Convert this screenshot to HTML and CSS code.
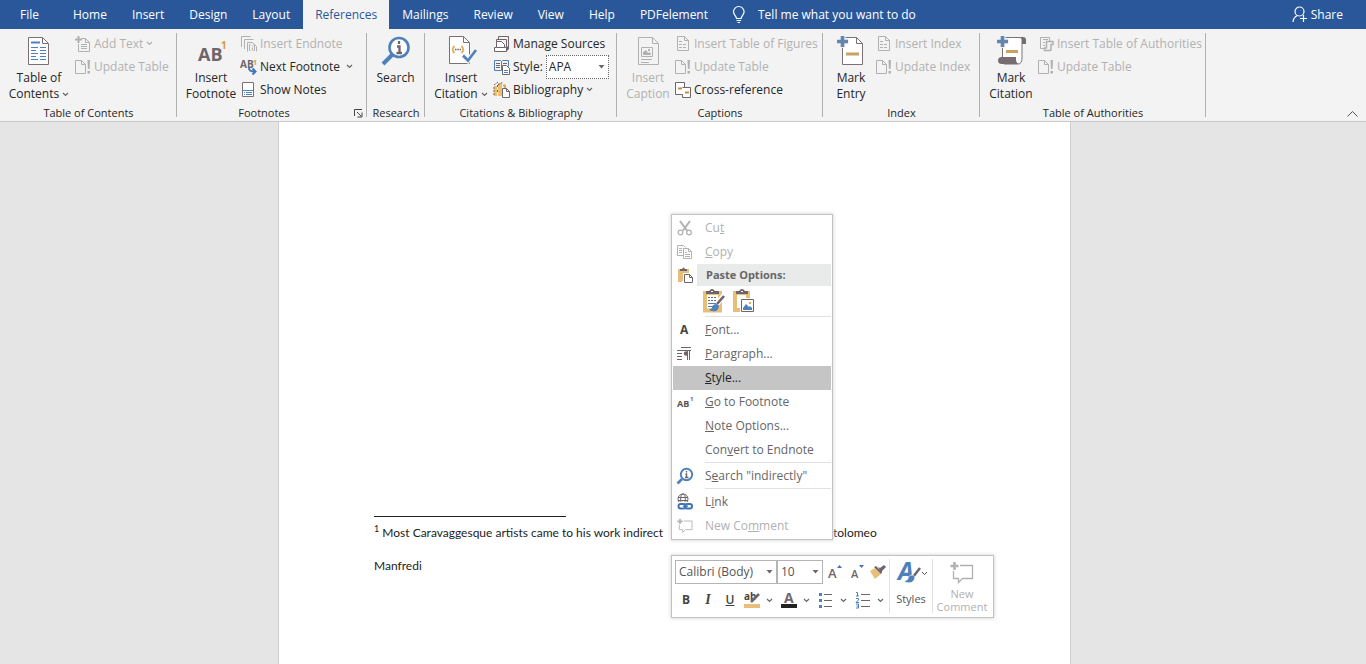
FILE: index.html
```html
<!DOCTYPE html>
<html lang="en">
<head>
<meta charset="utf-8">
<title>Document - Word</title>
<link rel="stylesheet" href="styles.css">
</head>
<body>
<svg class="defs" aria-hidden="true">
  <symbol id="chev" viewBox="0 0 7 5"><path d="M1 1l2.500 2.500L6 1" fill="none" stroke="currentColor" stroke-width="1.200"/></symbol>
  <symbol id="arrow" viewBox="0 0 7 4"><path d="M0.500 0h6L3.500 3.500z" fill="currentColor"/></symbol>
  <symbol id="update" viewBox="0 0 16 16"><path d="M.5 1.500h6l4 4v9H.5zM6.500 1.500v4h4" fill="none" stroke="currentColor"/><path d="M12.500 1h2.500l-.4 9h-1.700zM12.500 12H15v2.500h-2.500z" fill="currentColor"/></symbol>
  <symbol id="list" viewBox="0 0 16 16"><path d="M2.500.5h7l4 4v10h-11zM9.500.5v4h4" fill="none" stroke="currentColor"/><path d="M4 5.500h3M4 8.500h8M4 11.500h8" stroke="currentColor" stroke-dasharray="3 1"/></symbol>
  <symbol id="bubble" viewBox="0 0 24 24"><path d="M10 4.500h12.500v13h-10l-4 4v-4h-5V10" fill="none" stroke="currentColor" stroke-width="1.300"/><path d="M4.500 1v8M.5 5h8" stroke="currentColor" stroke-width="2.500"/></symbol>
  <symbol id="search" viewBox="0 0 30 30"><path d="M2 28l9-9" stroke="#5080bb" stroke-width="4"/><circle cx="18" cy="11.500" r="9.500" fill="#fff" stroke="#5080bb" stroke-width="2.600"/><path d="M18 5v3M16 10.500h2.500V17M15.500 17h5.500" fill="none" stroke="#6f6469" stroke-width="2.300"/></symbol>
</svg>

<header>
  <nav class="tabs" aria-label="Ribbon tabs">
    <a class="tab file" href="#">File</a>
    <a class="tab" href="#">Home</a>
    <a class="tab" href="#">Insert</a>
    <a class="tab" href="#">Design</a>
    <a class="tab" href="#">Layout</a>
    <a class="tab active" href="#" aria-current="page">References</a>
    <a class="tab" href="#">Mailings</a>
    <a class="tab" href="#">Review</a>
    <a class="tab" href="#">View</a>
    <a class="tab" href="#">Help</a>
    <a class="tab" href="#">PDFelement</a>
    <label class="tell">
      <svg width="14" height="18" viewBox="0 0 14 18"><path d="M4.500 12.500C4.500 10 1.500 9 1.500 5.800a5.300 5.300 0 0 1 10.600 0C12.100 9 9.100 10 9.100 12.500zM4.500 14.500h4.600M5.500 16.500h2.600" fill="none" stroke="#fff" stroke-width="1.200"/></svg>
      <input type="text" aria-label="Tell me what you want to do" placeholder="Tell me what you want to do">
    </label>
    <button class="share">
      <svg width="16" height="17" viewBox="0 0 16 17"><circle cx="7.500" cy="5.500" r="4.500" fill="none" stroke="#fff" stroke-width="1.200"/><path d="M1 16c.3-3.500 2-5.500 4.500-6.500M8 12.500h7M11.500 9v7" fill="none" stroke="#fff" stroke-width="1.200"/></svg>
      Share
    </button>
  </nav>

  <div class="ribbon">
    <section class="group g-toc" aria-label="Table of Contents">
      <div class="body">
        <button class="large">
          <svg width="30" height="32" viewBox="0 0 30 32"><path d="M4.500 2.500h14l6 6v21h-20z" fill="#fff" stroke="#7b7074"/><path d="M18.500 2.500v6h6" fill="none" stroke="#7b7074"/><path d="M7 7.500h9" stroke="#5080bb" stroke-width="2"/><path d="M7 12.500h7M16 12.500h6M7 15.500h5M16 15.500h6M7 18.500h7M16 18.500h6M7 21.500h5M16 21.500h6M7 24.500h7M16 24.500h6" stroke="#5080bb"/></svg>
          <span>Table of<br>Contents <svg class="chev"><use href="#chev"/></svg></span>
        </button>
        <div class="stack">
          <button class="small" disabled><svg class="ic" viewBox="0 0 16 16"><path d="M6.500 2.500h4l4 4v9h-11V8M10.500 2.500v4h4M6 8.500h6M6 10.500h6M6 12.500h6" fill="none" stroke="currentColor"/><path d="M3.500 0v7M0 3.500h7" stroke="currentColor" stroke-width="2"/></svg>Add Text <svg class="chev"><use href="#chev"/></svg></button>
          <button class="small" disabled><svg class="ic"><use href="#update"/></svg>Update Table</button>
        </div>
      </div>
      <h2>Table of Contents</h2>
    </section>

    <section class="group g-foot" aria-label="Footnotes">
      <div class="body">
        <button class="large">
          <svg width="30" height="32" viewBox="0 0 30 32"><text class="t-ab" x="2" y="26">AB</text><text class="t-one" x="25" y="14">1</text></svg>
          <span>Insert<br>Footnote</span>
        </button>
        <div class="stack">
          <button class="small" disabled><svg class="ic" viewBox="0 0 16 16"><path d="M.5 11V.5h9M3.500 13V3.500h9M6.500 15.500v-9h5l4 4v5M9.500 8.500h-1v6h1M12.500 8.500h1v6h-1M11.500 9.500v1M11.500 11.500v3" fill="none" stroke="currentColor"/></svg>Insert Endnote</button>
          <button class="small"><svg class="ic" viewBox="0 0 16 16"><text class="t-ab-s" x="-1" y="9">AB</text><text class="t-one-s" x="12" y="6">1</text><path d="M8 9c0 3 2 3.500 6 3.500M11.500 9.500l3 3-3 3" fill="none" stroke="#3f75b5" stroke-width="2"/></svg>Next Footnote <svg class="chev far"><use href="#chev"/></svg></button>
          <button class="small"><svg class="ic" viewBox="0 0 16 16"><path d="M1.500.5h11v14h-11z" fill="#fff" stroke="#7b7074"/><path d="M1 8.500h12M3 10.500h1M5 10.500h6M3 12.500h1M5 12.500h6" stroke="#5080bb"/></svg>Show Notes</button>
        </div>
      </div>
      <h2>Footnotes</h2>
      <button class="launcher" aria-label="Footnote and endnote settings"><svg width="9" height="9" viewBox="0 0 9 9"><path d="M.5 7V.5H8M3 3l4 4M8 3.500V8H3.500" fill="none" stroke="#444"/></svg></button>
    </section>

    <section class="group g-research" aria-label="Research">
      <div class="body">
        <button class="large"><svg width="30" height="32" viewBox="0 0 30 32"><use href="#search" y="1" width="30" height="30"/></svg><span>Search</span></button>
      </div>
      <h2>Research</h2>
    </section>

    <section class="group g-cite" aria-label="Citations &amp; Bibliography">
      <div class="body">
        <button class="large">
          <svg width="30" height="32" viewBox="0 0 30 32"><path d="M3.500 1.500h14l6 6v21h-20z" fill="#fff" stroke="#7b7074"/><path d="M17.500 1.500v6h6" fill="none" stroke="#7b7074"/><path d="M8.500 11Q5 14.500 8.500 18M15.500 11q3.500 3.500 0 7" fill="none" stroke="#e3b264" stroke-width="2"/><path d="M9 14.500h6" stroke="#6f6469" stroke-width="1.500" stroke-dasharray="1.500 .8"/><path d="M17 20.500l5 5L30 15" fill="none" stroke="#f3f3f3" stroke-width="5"/><path d="M17 20.500l5 5L30 15" fill="none" stroke="#5080bb" stroke-width="2.600"/></svg>
          <span>Insert<br>Citation <svg class="chev"><use href="#chev"/></svg></span>
        </button>
        <div class="stack">
          <button class="small"><svg class="ic" viewBox="0 0 16 16"><path d="M4.500 3V.5h10V11M2.500 6V3.500h10V13" fill="none" stroke="#6f6469"/><path d="M.5 15.500v-4h2v-6h5l3 3v3h2v4zM2.500 11.500h8" fill="#fff" stroke="#6f6469"/><path d="M13 11l2-2v4l-2 2z" fill="#6f6469"/></svg>Manage Sources</button>
          <div class="small style-row"><svg class="ic" viewBox="0 0 16 16"><path d="M.5 1.500h6l1 1 1-1h6v6M7.500 2.500v9M.5 1.500v10h7" fill="none" stroke="#5080bb"/><path d="M2 4.500h4M2 6.500h4M2 8.500h4M9 4.500h4" stroke="#6f6469"/><path d="M8.500 6.500h4l3 3v6h-7z" fill="#fff" stroke="#6f6469"/><path d="M10 11.500h4M10 13.500h4" stroke="#5080bb"/></svg><label for="style">Style:</label>
            <span class="select"><select id="style"><option>APA</option></select><svg class="arrow"><use href="#arrow"/></svg></span></div>
          <button class="small"><svg class="ic" viewBox="0 0 16 16"><path d="M0 4h3v10H0zM4 1h4v13H4z" fill="#e8bf78"/><path d="M0 3l4-3M4 3l5-3M0 5v9M3.500 3v3M3.500 8v2" stroke="#6f6469" stroke-dasharray="2 1"/><path d="M9 3.500h2V6" fill="none" stroke="#e3a94f" stroke-width="2"/><path d="M8.500 6.500h4l3 3v6h-7z" fill="#fff" stroke="#6f6469"/><path d="M12.500 6.500v3h3" fill="none" stroke="#6f6469"/></svg>Bibliography <svg class="chev"><use href="#chev"/></svg></button>
        </div>
      </div>
      <h2>Citations &amp; Bibliography</h2>
    </section>

    <section class="group g-cap" aria-label="Captions">
      <div class="body">
        <button class="large" disabled>
          <svg width="30" height="32" viewBox="0 0 30 32"><path d="M5.500 2.500h14l6 6v21h-20zM19.500 2.500v6h6" fill="none" stroke="currentColor"/><path d="M8.500 12.500h11v9h-11zM8 24.500h11M8 27.500h8" fill="none" stroke="currentColor"/><path d="M10 20v-3l3-2 2 3 2-1 1 3zM15 14h2v2h-2z" fill="currentColor"/></svg>
          <span>Insert<br>Caption</span>
        </button>
        <div class="stack">
          <button class="small" disabled><svg class="ic"><use href="#list"/></svg>Insert Table of Figures</button>
          <button class="small" disabled><svg class="ic"><use href="#update"/></svg>Update Table</button>
          <button class="small"><svg class="ic" viewBox="0 0 16 16"><path d="M.5.5h9v12h-9z" fill="#fff" stroke="#6f6469"/><path d="M7.500 5.500h8v10h-8v-3" fill="#fff" stroke="#6f6469"/><path d="M3 6.500h4M10 10.500h4" stroke="#c98b3c" stroke-width="2"/></svg>Cross-reference</button>
        </div>
      </div>
      <h2>Captions</h2>
    </section>

    <section class="group g-index" aria-label="Index">
      <div class="body">
        <button class="large">
          <svg width="30" height="32" viewBox="0 0 30 32"><path d="M6.500 2.500h14l6 6v21h-20z" fill="#fff" stroke="#7b7074"/><path d="M20.500 2.500v6h6" fill="none" stroke="#7b7074"/><path d="M6.500 0v13M0 6.500h13" stroke="#f3f3f3" stroke-width="6"/><path d="M6.500 1v11M1 6.500h11" stroke="#6286af" stroke-width="3.600"/><path d="M10 19h13" stroke="#c9a262" stroke-width="3"/></svg>
          <span>Mark<br>Entry</span>
        </button>
        <div class="stack">
          <button class="small" disabled><svg class="ic"><use href="#list"/></svg>Insert Index</button>
          <button class="small" disabled><svg class="ic"><use href="#update"/></svg>Update Index</button>
        </div>
      </div>
      <h2>Index</h2>
    </section>

    <section class="group g-auth" aria-label="Table of Authorities">
      <div class="body">
        <button class="large">
          <svg width="30" height="32" viewBox="0 0 30 32"><path d="M6.500 23V2.500H26V23q0 6-4 6H8z" fill="#fff" stroke="#7b7074"/><path d="M24 2h3q3 0 3 3v4h-4V5q0-2-2-2zM5 22h15v3q0 2 2 4H5q-3-.5-3-3.500T5 22z" fill="#766c72"/><path d="M6.500 0v13M0 6.500h13" stroke="#f3f3f3" stroke-width="6"/><path d="M6.500 1v11M1 6.500h11" stroke="#6286af" stroke-width="3.600"/><path d="M10 16.500h12" stroke="#c9a262" stroke-width="3"/></svg>
          <span>Mark<br>Citation</span>
        </button>
        <div class="stack">
          <button class="small" disabled><svg class="ic" viewBox="0 0 16 16"><path d="M7 12.500H2.500V1.500h9V5M5 3.500h5M5 6.500h2M5 9.500h2" fill="none" stroke="currentColor"/><path d="M8.500 12V5.500H15v3h-2V14q-1 .5-1 .5H6.500V12z" fill="none" stroke="currentColor" stroke-width="1.500"/></svg>Insert Table of Authorities</button>
          <button class="small" disabled><svg class="ic"><use href="#update"/></svg>Update Table</button>
        </div>
      </div>
      <h2>Table of Authorities</h2>
    </section>
    <button class="collapse" aria-label="Collapse the ribbon"><svg width="11" height="6" viewBox="0 0 11 6"><path d="M.5 5.500l5-5 5 5" fill="none" stroke="#555"/></svg></button>
  </div>
</header>

<main class="workspace">
  <article class="page">
    <hr class="note-rule">
    <p class="note"><span class="lead"><sup>1</sup> Most Caravaggesque artists came to his work indirect</span><span>tolomeo</span></p>
    <p>Manfredi</p>

    <div class="menu" role="menu">
      <button role="menuitem" disabled><svg class="mi" viewBox="0 0 16 16"><path d="M3 1l7 9.500M13 1L6 10.500" stroke="currentColor" stroke-width="2"/><circle cx="3.500" cy="12.500" r="2.300" fill="none" stroke="currentColor" stroke-width="1.300"/><circle cx="12" cy="12.500" r="2.300" fill="none" stroke="currentColor" stroke-width="1.300"/></svg><span>Cu<u>t</u></span></button>
      <button role="menuitem" disabled><svg class="mi" viewBox="0 0 16 16"><path d="M6 11.500H.5V1.500h6l2 2M2 4.500h3M2 6.500h3M2 8.500h3M6.500 4.500h5l3 3v7h-8zM11.500 4.500v3h3M8 8.500h2M8 10.500h5M8 12.500h5" fill="none" stroke="currentColor"/></svg><span><u>C</u>opy</span></button>
      <div class="heading"><svg class="mi" viewBox="0 0 16 16"><path d="M1 2h11v4H9V4H5v11H1z" fill="#e8bf78"/><path d="M5 4h4v3H6v7H5z" fill="#e8bf78"/><path d="M3 4V2h2q1.500-3 3 0h2v2z" fill="#6f6469"/><path d="M7.500 7.500h5l3 3v5h-8z" fill="#fff" stroke="#fff" stroke-width="3"/><path d="M7.500 7.500h5l3 3v5h-8zM12.500 7.500v3h3" fill="#fff" stroke="#6f6469"/></svg><strong>Paste Options:</strong></div>
      <div class="paste">
        <button aria-label="Merge formatting"><svg width="22" height="24" viewBox="0 0 22 24"><path d="M2 4h15v17.500H2z" fill="#fff" stroke="#e8bf78" stroke-width="4"/><path d="M3 5V2h3q3-4 6 0h4v3z" fill="#6f6469"/><path d="M8 2h2v1H8z" fill="#fff"/><path d="M5 8.500h9M5 11.500h9" stroke="#6f6469" stroke-dasharray="2 1"/><path d="M5 14.500h8M5 17.500h5" stroke="#5080bb"/><path d="M21 6l-7 9" stroke="#fff" stroke-width="5"/><path d="M21 7l-7 8" stroke="#6f6469" stroke-width="2.500"/><path d="M14 15q-5 0-5 4l-3 2q9 4 10-4z" fill="#5080bb"/></svg></button>
        <button aria-label="Picture"><svg width="22" height="24" viewBox="0 0 22 24"><path d="M8 21H2V4h13v5" fill="none" stroke="#e8bf78" stroke-width="4"/><path d="M3 5V2h3q3-4 6 0h3v3z" fill="#6f6469"/><path d="M8 2h2v1H8z" fill="#fff"/><path d="M8.500 10.500h12v12h-12z" fill="#fff" stroke="#fff" stroke-width="3"/><path d="M8.500 10.500h12v12h-12z" fill="#fff" stroke="#6f6469"/><path d="M10 21v-2l3-4 3 3 1-1 2 2v2z" fill="#5080bb"/><path d="M16 13h2v2h-2z" fill="#e3a94f"/></svg></button>
      </div>
      <div class="sep" role="separator"></div>
      <button role="menuitem"><svg class="mi" viewBox="0 0 16 16"><text class="t-menu" x="3" y="12">A</text></svg><span><u>F</u>ont...</span></button>
      <button role="menuitem"><svg class="mi" viewBox="0 0 16 16"><path d="M4 1.500h10M0 4.500h14M0 7.500h5M0 10.500h5M0 13.500h5M10.500 5v9M12.500 5v9" stroke="#6f6469"/><circle cx="9" cy="7.500" r="2.200" fill="#6f6469"/></svg><span><u>P</u>aragraph...</span></button>
      <button role="menuitem" class="hover"><span class="mi"></span><span><u>S</u>tyle...</span></button>
      <button role="menuitem"><svg class="mi" viewBox="0 0 16 16"><text class="t-ab-m" x="0" y="13">AB</text><text class="t-one-m" x="13" y="7">1</text></svg><span><u>G</u>o to Footnote</span></button>
      <button role="menuitem"><span class="mi"></span><span><u>N</u>ote Options...</span></button>
      <button role="menuitem"><span class="mi"></span><span>Con<u>v</u>ert to Endnote</span></button>
      <div class="sep" role="separator"></div>
      <button role="menuitem"><svg class="mi" viewBox="0 0 16 16"><path d="M.5 15.500L5 11" stroke="#5080bb" stroke-width="2.600"/><circle cx="9.500" cy="6.500" r="5.700" fill="#fff" stroke="#5080bb" stroke-width="1.900"/><path d="M9.500 3v1.500M8.500 6h1v3.500M8 9.500h3.500" fill="none" stroke="#6f6469" stroke-width="1.500"/></svg><span>S<u>e</u>arch "indirectly"</span></button>
      <div class="sep" role="separator"></div>
      <button role="menuitem"><svg class="mi" viewBox="0 0 16 16"><circle cx="6" cy="5" r="5" fill="none" stroke="#6f6469"/><ellipse cx="6" cy="5" rx="2.300" ry="5" fill="none" stroke="#6f6469"/><path d="M1 3.500h10M1 6.500h10" stroke="#6f6469"/><path d="M0 8h16v8H0z" fill="#fff"/><rect x="1.500" y="10" width="7" height="4.500" rx="2.200" fill="none" stroke="#3f75b5" stroke-width="2"/><rect x="8" y="10" width="7" height="4.500" rx="2.200" fill="none" stroke="#3f75b5" stroke-width="2"/><path d="M6 12.200h5" stroke="#3f75b5" stroke-width="1.300"/></svg><span>L<u>i</u>nk</span></button>
      <button role="menuitem" disabled><svg class="mi"><use href="#bubble"/></svg><span>New Co<u>m</u>ment</span></button>
    </div>

    <div class="mini" role="toolbar" aria-label="Mini toolbar">
      <div class="mini-main">
        <div class="mini-row">
          <span class="select font"><select aria-label="Font"><option>Calibri (Body)</option></select><svg class="arrow"><use href="#arrow"/></svg></span>
          <span class="select size"><select aria-label="Font size"><option>10</option></select><svg class="arrow"><use href="#arrow"/></svg></span>
          <button aria-label="Grow font"><svg width="16" height="18" viewBox="0 0 16 18"><text class="t-grow" x="2" y="15">A</text><path d="M11 5l2.500-3L16 5z" fill="#3f75b5"/></svg></button>
          <button aria-label="Shrink font"><svg width="16" height="18" viewBox="0 0 16 18"><text class="t-shrink" x="3" y="15">A</text><path d="M11 2h5l-2.500 3z" fill="#3f75b5"/></svg></button>
          <button aria-label="Format painter"><svg width="16" height="16" viewBox="0 0 16 16"><path d="M5 4l6 6-6 5-5-8z" fill="#e8bf78"/><path d="M4 3l2-1 6 6-1 2zM8 3l2 1 4-3 2 2-4 4 0 2z" fill="#6f6469"/></svg></button>
        </div>
        <div class="mini-row">
          <button class="b">B</button><button class="i">I</button><button class="u">U</button>
          <button class="split" aria-label="Text highlight color"><svg width="16" height="18" viewBox="0 0 16 18"><text class="t-hl" x="0" y="9">ab</text><path d="M15 3L7 11" stroke="#6f6469" stroke-width="2.500"/><path d="M0 13h16v4H0z" fill="#e8bf78"/></svg><svg class="chev"><use href="#chev"/></svg></button>
          <button class="split" aria-label="Font color"><svg width="16" height="18" viewBox="0 0 16 18"><text class="t-color" x="3" y="12">A</text><path d="M0 13h16v4H0z" fill="#222"/></svg><svg class="chev"><use href="#chev"/></svg></button>
          <button class="split" aria-label="Bullets"><svg width="16" height="18" viewBox="0 0 16 18"><path d="M1 2h3v3H1zM1 8h3v3H1zM1 14h3v3H1z" fill="#5080bb"/><path d="M6 3.500h8M6 9.500h8M6 15.500h8" stroke="#6f6469"/></svg><svg class="chev"><use href="#chev"/></svg></button>
          <button class="split" aria-label="Numbering"><svg width="16" height="18" viewBox="0 0 16 18"><path d="M1 1.500h1.500V5M1 5h3M1 7.500h2.500V9L1 11.500h3M1 13h2.500v4H1M1.500 15h2" fill="none" stroke="#5080bb"/><path d="M6 3.500h9M6 9.500h9M6 15.500h9" stroke="#6f6469"/></svg><svg class="chev"><use href="#chev"/></svg></button>
        </div>
      </div>
      <button class="tall styles"><svg width="32" height="24" viewBox="0 0 32 24"><text class="t-styles" x="3" y="19">A</text><path d="M25 7l-7 8" stroke="#fff" stroke-width="4"/><path d="M25 7l-7 9" stroke="#6f6469" stroke-width="2.500"/><path d="M18 14q-5 0-5 4l-4 3q10 3 11-5z" fill="#5080bb" stroke="#fff" stroke-width=".6"/><path d="M27 11l2.500 2.500L32 11" fill="none" stroke="#555"/></svg>Styles</button>
      <button class="tall comment" disabled><svg width="24" height="24"><use href="#bubble"/></svg>New<br>Comment</button>
    </div>
  </article>
</main>
</body>
</html>
```
FILE: styles.css
```css
* { box-sizing: border-box; }
body {
  margin: 0;
  min-height: 100vh;
  display: flex;
  flex-direction: column;
  background: #e5e5e5;
  color: #262626;
  font: 12px/16px "Open Sans", "Noto Sans", sans-serif;
}
button, input, select { font: inherit; color: inherit; }
button { border: 0; padding: 0; background: none; white-space: nowrap; }
button:disabled { color: #b1b1b1; }
svg { display: block; flex: none; overflow: visible; }
.defs { position: absolute; width: 0; height: 0; }

/* Tab strip */
.tabs { display: flex; gap: 1px; height: 29px; background: #2a579a; color: #fff; }
.tab { padding: 0 12px; line-height: 29px; color: inherit; text-decoration: none; }
.tab.file { padding: 0 21px 0 20px; }
.tab.active { background: #f3f3f3; color: #2a579a; }
.tell { display: flex; align-items: center; gap: 12px; margin-left: 11px; flex: 1; }
.tell input { width: 200px; border: 0; padding: 0; background: none; outline: 0; }
.tell input::placeholder { color: #fff; opacity: 1; }
.share { display: flex; align-items: center; gap: 3px; padding-right: 23px; }

/* Ribbon */
.ribbon { display: flex; height: 93px; background: #f3f3f3; border-bottom: 1px solid #c8c8c8; }
.group { position: relative; display: flex; flex-direction: column; flex: none; }
.group::after { content: ""; position: absolute; right: 0; top: 4px; bottom: 4px; width: 1px; background: #b1b1b1; }
.body { display: flex; height: 75px; padding-top: 3px; padding-left: 4px; }
.group h2 { margin: 0; font-size: 11px; font-weight: 400; line-height: 17px; text-align: center; }
.large { display: flex; flex-direction: column; align-items: center; padding-top: 3px; gap: 3px; }
.large span { line-height: 16px; }
.stack { display: flex; flex-direction: column; }
.small { display: flex; align-items: center; gap: 3px; height: 23px; white-space: nowrap; }
.ic { width: 16px; height: 16px; }
.chev { display: inline-block; width: 7px; height: 5px; color: #666; vertical-align: middle; }
:disabled .chev { color: #b1b1b1; }
.chev.far { margin-left: 3px; }
.g-toc { width: 177px; } .g-toc .large { width: 70px; margin-right: 1px; }
.g-foot { width: 190px; } .g-foot .body { padding-left: 6px; } .g-foot .large { width: 56px; margin-right: 2px; }
.g-foot h2 { padding-right: 16px; }
.g-research { width: 58px; } .g-research .large { width: 49px; }
.g-cite { width: 192px; } .g-cite .body { padding-left: 6px; } .g-cite .large { width: 60px; margin-right: 3px; }
.g-cap { width: 206px; } .g-cap .large { width: 54px; }
.g-index { width: 157px; } .g-index .large { width: 48px; margin-right: 1px; }
.g-auth { width: 226px; } .g-auth .large { width: 54px; }
.launcher { position: absolute; right: 4px; bottom: 3px; }
.collapse { margin-left: auto; align-self: flex-end; padding: 0 8px 4px 0; }

.select { position: relative; display: block; }
.select select { display: block; width: 100%; height: 24px; appearance: none; margin: 0; padding: 0 0 0 3px; background: #fff; border: 1px solid #b4b4b4; border-radius: 0; outline: 0; }
.select .arrow { position: absolute; right: 4px; top: 10px; width: 7px; height: 4px; color: #6f6469; pointer-events: none; }
.style-row .select { width: 63px; }
.style-row select { border: 1px dotted #666; padding-left: 2px; }

/* Document area */
.workspace { flex: 1; display: flex; justify-content: center; padding-right: 17px; }
.page { position: relative; width: 793px; padding: 394px 95px 0; background: #fff; border: solid #cfcfcf; border-width: 0 1px; }
.note-rule { width: 192px; height: 1px; margin: 0; border: 0; background: #222; }
.page p { margin: 0; font: 12px/33px Lato, "Open Sans", sans-serif; color: #222; white-space: nowrap; }
.page .note { display: flex; line-height: 32px; }
.note .lead { width: 459px; }
.page sup { font-size: 9px; line-height: 0; }

/* Context menu */
.menu { position: absolute; left: 392px; top: 92px; width: 162px; padding: 1px; display: flex; flex-direction: column; background: #fff; border: 1px solid #c1c1c1; box-shadow: 0 0 3px 1px #e2e2e2; color: #666; }
.menu > button, .heading { display: flex; align-items: center; gap: 12px; height: 24px; padding-left: 4px; }
.menu > .hover { background: #c5c5c5; color: #222; }
.mi { width: 16px; height: 16px; flex: none; }
.menu .heading { height: 22px; gap: 4px; }
.heading strong { flex: 1; padding-left: 9px; line-height: 22px; background: #e9ebeb; font-size: 11px; font-weight: 700; }
.paste { display: flex; align-items: center; gap: 8px; height: 30px; padding-left: 30px; }
.sep { height: 1px; margin: 0 0 1px 32px; background: #e1e1e1; }

/* Mini toolbar */
.mini { position: absolute; left: 392px; top: 433px; display: flex; padding: 3px 2px 4px 3px; background: #fff; border: 1px solid #c1c1c1; box-shadow: 0 0 3px 1px #e2e2e2; color: #555; }
.mini-main { padding-top: 1px; }
.mini-row { display: flex; align-items: center; height: 24px; }
.mini-row + .mini-row { margin-top: 4px; }
.mini-row > button { width: 22px; height: 24px; display: flex; align-items: center; justify-content: center; color: #444; }
.font { width: 102px; }
.size { width: 46px; }
.mini-row .split { width: 37px; justify-content: flex-start; gap: 6px; padding-left: 3px; }
.b { font-weight: 700; }
.i { font-family: "Liberation Serif", serif; font-style: italic; font-weight: 700; font-size: 14px; }
.u { font-weight: 600; text-decoration: underline; }
.tall { display: flex; flex-direction: column; align-items: center; border-left: 1px solid #e1e1e1; line-height: 13px; font-size: 11px; }
.styles { width: 43px; padding-top: 2px; gap: 7px; color: #555; }
.comment { width: 59px; padding-top: 2px; display: block; }
.comment svg { margin: 0 auto 2px; }

/* Letters inside icons */
text { font-family: "Open Sans", sans-serif; font-weight: 700; fill: #6f6469; }
.t-ab { font-size: 18px; }
.t-one { font-size: 10px; fill: #d69a3a; }
.t-ab-s { font-size: 10px; }
.t-one-s { font-size: 7px; fill: #d69a3a; }
.t-menu { font-size: 12px; fill: #444; }
.t-ab-m { font-size: 9px; fill: #555; }
.t-one-m { font-size: 6px; }
.t-grow { font-size: 13px; font-weight: 600; }
.t-shrink { font-size: 11px; font-weight: 600; }
.t-hl { font-size: 10px; fill: #444; }
.t-color { font-size: 14px; }
.t-styles { font-size: 25px; font-style: italic; fill: #5080bb; }
```
